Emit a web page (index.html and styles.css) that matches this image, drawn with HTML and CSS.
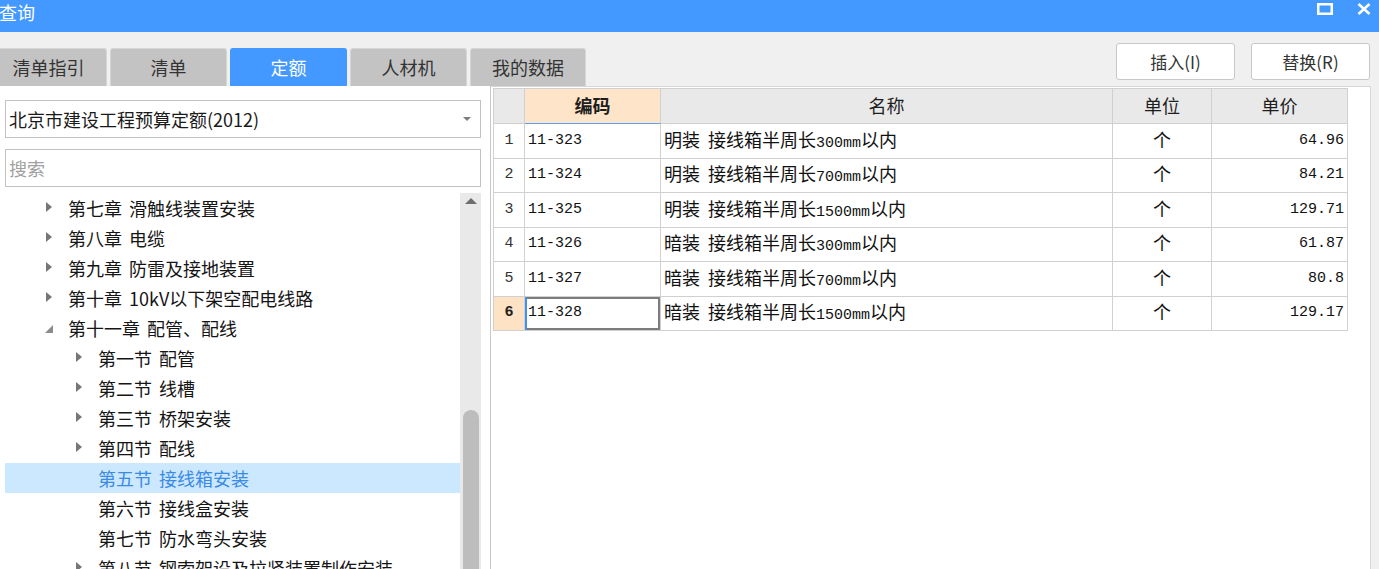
FILE: index.html
```html
<!DOCTYPE html>
<html lang="zh-CN">
<head>
<meta charset="utf-8">
<title>查询</title>
<link rel="stylesheet" href="styles.css">
</head>
<body>
<div class="window">
  <header class="titlebar">
    <span class="title">查询</span>
    <div class="win-ctrls">
      <svg class="ico" width="16" height="12" viewBox="0 0 16 12"><rect x="1.25" y="1.25" width="13.5" height="9.5" fill="none" stroke="#fff" stroke-width="2.5"/></svg>
      <svg class="ico" width="14" height="12" viewBox="0 0 14 12"><path d="M1.5 1 L12.5 11 M12.5 1 L1.5 11" stroke="#fff" stroke-width="2.6" fill="none"/></svg>
    </div>
  </header>

  <div class="toolbar">
    <nav class="tabs">
      <div class="tab">清单指引</div>
      <div class="tab">清单</div>
      <div class="tab active">定额</div>
      <div class="tab">人材机</div>
      <div class="tab">我的数据</div>
    </nav>
    <div class="actions">
      <button class="btn">插入(I)</button>
      <button class="btn">替换(R)</button>
    </div>
  </div>

  <div class="main">
    <aside class="left">
      <div class="select"><span>北京市建设工程预算定额(2012)</span><i class="caret"></i></div>
      <div class="search">搜索</div>
      <div class="tree-wrap">
        <ul class="tree">
          <li class="node l1"><i class="tw closed"></i>第七章 滑触线装置安装</li>
          <li class="node l1"><i class="tw closed"></i>第八章 电缆</li>
          <li class="node l1"><i class="tw closed"></i>第九章 防雷及接地装置</li>
          <li class="node l1"><i class="tw closed"></i>第十章 10kV以下架空配电线路</li>
          <li class="node l1"><i class="tw open"></i>第十一章 配管、配线</li>
          <li class="node l2"><i class="tw closed"></i>第一节 配管</li>
          <li class="node l2"><i class="tw closed"></i>第二节 线槽</li>
          <li class="node l2"><i class="tw closed"></i>第三节 桥架安装</li>
          <li class="node l2"><i class="tw closed"></i>第四节 配线</li>
          <li class="node l2 selected"><i class="tw"></i>第五节 接线箱安装</li>
          <li class="node l2"><i class="tw"></i>第六节 接线盒安装</li>
          <li class="node l2"><i class="tw"></i>第七节 防水弯头安装</li>
          <li class="node l2"><i class="tw closed"></i>第八节 钢索架设及拉紧装置制作安装</li>
        </ul>
        <div class="vscroll">
          <i class="up"></i>
          <div class="thumb"></div>
        </div>
      </div>
    </aside>

    <section class="right">
      <div class="pane">
        <table class="grid">
          <thead>
            <tr>
              <th class="c-no"></th>
              <th class="c-code cur">编码</th>
              <th class="c-name">名称</th>
              <th class="c-unit">单位</th>
              <th class="c-price">单价</th>
            </tr>
          </thead>
          <tbody>
            <tr><td class="no">1</td><td class="code">11-323</td><td class="name">明装 接线箱半周长<span class="lat">300mm</span>以内</td><td class="unit">个</td><td class="price">64.96</td></tr>
            <tr><td class="no">2</td><td class="code">11-324</td><td class="name">明装 接线箱半周长<span class="lat">700mm</span>以内</td><td class="unit">个</td><td class="price">84.21</td></tr>
            <tr><td class="no">3</td><td class="code">11-325</td><td class="name">明装 接线箱半周长<span class="lat">1500mm</span>以内</td><td class="unit">个</td><td class="price">129.71</td></tr>
            <tr><td class="no">4</td><td class="code">11-326</td><td class="name">暗装 接线箱半周长<span class="lat">300mm</span>以内</td><td class="unit">个</td><td class="price">61.87</td></tr>
            <tr><td class="no">5</td><td class="code">11-327</td><td class="name">暗装 接线箱半周长<span class="lat">700mm</span>以内</td><td class="unit">个</td><td class="price">80.8</td></tr>
            <tr class="cur-row"><td class="no">6</td><td class="code focus">11-328</td><td class="name">暗装 接线箱半周长<span class="lat">1500mm</span>以内</td><td class="unit">个</td><td class="price">129.17</td></tr>
          </tbody>
        </table>
      </div>
    </section>
  </div>
</div>
</body>
</html>
```

FILE: styles.css
```css
* {
  box-sizing: border-box;
  margin: 0;
  padding: 0;
}

html, body {
  width: 1379px;
  height: 569px;
  overflow: hidden;
}

body {
  background: #f0f0f0;
  font-family: "Noto Sans CJK SC", "Noto Sans", sans-serif;
  font-size: 18px;
  color: #222;
}

/* title bar */
.titlebar {
  height: 32px;
  background: #4399ff;
  display: flex;
  justify-content: space-between;
  align-items: flex-start;
  color: #fff;
}

.title {
  font-size: 18px;
  line-height: 24px;
  margin-left: -1px;
}

.win-ctrls {
  display: flex;
  gap: 24px;
  padding-top: 3px;
  margin-right: 8px;
}

.ico {
  display: block;
}

/* toolbar with tabs and buttons */
.toolbar {
  height: 54px;
  display: flex;
  justify-content: space-between;
}

.tabs {
  display: flex;
  gap: 3px;
  align-self: flex-end;
  margin-left: -10px;
}

.tab {
  width: 117px;
  height: 38px;
  background: #c3c3c3;
  border: 1px solid #d6d6d6;
  border-bottom: none;
  border-radius: 3px 3px 0 0;
  color: #333;
  font-size: 18px;
  line-height: 36px;
  text-align: center;
}

.tab:last-child {
  width: 116px;
}

.tab.active {
  background: #4399ff;
  border-color: #4399ff;
  color: #fff;
}

.actions {
  display: flex;
  gap: 16px;
  padding-top: 11px;
  margin-right: 9px;
}

.btn {
  width: 119px;
  height: 37px;
  background: #fff;
  border: 1px solid #c8c8c8;
  border-radius: 3px;
  font-family: "Noto Sans CJK SC", "Noto Sans", sans-serif;
  font-size: 17px;
  color: #333;
}

/* main area */
.main {
  display: flex;
  height: 483px;
}

.left {
  width: 490px;
  background: #fff;
  padding: 14px 9px 0 5px;
  display: flex;
  flex-direction: column;
}

.select {
  height: 38px;
  border: 1px solid #c2c2c2;
  display: flex;
  align-items: center;
  padding: 0 9px 0 3px;
  color: #1a1a1a;
}

.caret {
  margin-left: auto;
  width: 0;
  height: 0;
  border-top: 4px solid #7d7d7d;
  border-left: 4px solid transparent;
  border-right: 4px solid transparent;
}

.search {
  margin-top: 11px;
  height: 38px;
  border: 1px solid #c2c2c2;
  padding-left: 3px;
  line-height: 36px;
  color: #a0a0a0;
}

.tree-wrap {
  margin-top: 6px;
  flex: 1;
  display: flex;
  min-height: 0;
}

.tree {
  list-style: none;
  width: 456px;
}

.node {
  height: 30px;
  line-height: 30px;
  display: flex;
  align-items: center;
  white-space: nowrap;
  color: #151515;
  word-spacing: 3px;
}

.node.l1 {
  padding-left: 40px;
}

.node.l2 {
  padding-left: 70px;
}

.node.selected {
  background: #cce8ff;
  color: #3b8ae4;
}

.tw {
  width: 23px;
  height: 30px;
  flex: none;
  position: relative;
}

.tw.closed::before {
  content: "";
  position: absolute;
  left: 1px;
  top: 9px;
  border-left: 6px solid #767676;
  border-top: 5px solid transparent;
  border-bottom: 5px solid transparent;
}

.tw.open::before {
  content: "";
  position: absolute;
  left: 0;
  top: 12px;
  border-bottom: 8px solid #8c8c8c;
  border-left: 8px solid transparent;
}

.vscroll {
  width: 21px;
  background: #e9e9e9;
  display: flex;
  flex-direction: column;
  align-items: center;
}

.up {
  margin-top: 5px;
  width: 0;
  height: 0;
  border-bottom: 6px solid #6e6e6e;
  border-left: 6px solid transparent;
  border-right: 6px solid transparent;
}

.thumb {
  margin-top: 206px;
  width: 16px;
  flex: 1;
  background: #bdbdbd;
  border-radius: 8px 8px 0 0;
}

/* right area */
.right {
  flex: 1;
  display: flex;
  padding-right: 8px;
}

.pane {
  flex: 1;
  background: #fff;
  border-left: 1px solid #c8c8c8;
  border-right: 1px solid #d6d6d6;
  border-top: 1px solid #d6d6d6;
  padding: 1px 0 0 2px;
}

.grid {
  border-collapse: separate;
  border-spacing: 0;
  table-layout: fixed;
  width: 855px;
  border-left: 1px solid #d0d0d0;
  border-top: 1px solid #d0d0d0;
  color: #111;
}

.grid th,
.grid td {
  border-right: 1px solid #d0d0d0;
  border-bottom: 1px solid #d0d0d0;
  overflow: hidden;
  white-space: nowrap;
}

.grid thead tr {
  height: 35px;
}

.grid tbody tr {
  height: 34.5px;
}

.grid th {
  background: #e9e9e9;
  font-weight: normal;
  font-size: 18px;
  color: #1e1e1e;
  padding-bottom: 3px;
}

.c-no { width: 31px; }
.c-code { width: 136px; }
.c-name { width: 452px; }
.c-unit { width: 99px; }
.c-price { width: 136px; }

.grid th.cur {
  background: #fee5c9;
  font-weight: bold;
  border-bottom-color: #5ba2f2;
}

.no {
  background: #fff;
  text-align: center;
  font-family: "Liberation Mono", monospace;
  font-size: 15px;
  color: #333;
  padding-bottom: 1px;
}

.cur-row .no {
  background: #fde2c3;
  font-weight: bold;
  color: #222;
}

.code {
  font-family: "Liberation Mono", monospace;
  font-size: 15px;
  padding-left: 3px;
  padding-bottom: 1px;
}

.code.focus {
  box-shadow: inset 2px 0 0 #3f90f0, inset 0 2px 0 #7c7c7c, inset -2px 0 0 #7c7c7c, inset 0 -2px 0 #7c7c7c;
}

.name {
  font-size: 18px;
  padding-left: 3px;
  padding-bottom: 4px;
  word-spacing: 4px;
}

.lat {
  font-family: "Liberation Mono", monospace;
  font-size: 15px;
  word-spacing: 0;
}

.unit {
  text-align: center;
  font-size: 18px;
  padding-bottom: 4px;
}

.price {
  text-align: right;
  padding-right: 3px;
  padding-bottom: 1px;
  font-family: "Liberation Mono", monospace;
  font-size: 15px;
}
```
